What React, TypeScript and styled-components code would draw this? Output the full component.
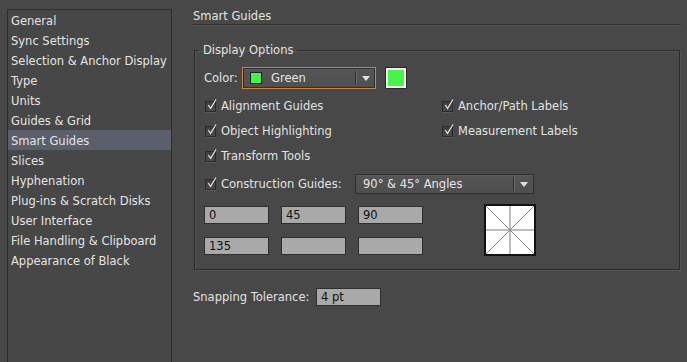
import React from "react";
import styled, { createGlobalStyle } from "styled-components";

const Global = createGlobalStyle`
  html, body { margin: 0; padding: 0; background: #484848; }
  body { font-family: "DejaVu Sans", "Liberation Sans", sans-serif; font-size: 11.5px; color: #e2e2e2; }
`;

const Page = styled.div`
  display: flex;
  width: 687px;
  height: 362px;
  overflow: hidden;
  box-sizing: border-box;
  padding: 9px 0 0 7px;
  background: #484848;
`;

const Sidebar = styled.ul`
  list-style: none;
  margin: 0;
  padding: 0;
  width: 165px;
  height: 380px;
  box-sizing: border-box;
  border: 1px solid #2c2c2c;
  background: #474747;
  flex: none;
`;

const NavItem = styled.li<{ $selected?: boolean }>`
  height: 20px;
  box-sizing: border-box;
  padding: 2px 0 0 3px;
  line-height: 18px;
  white-space: nowrap;
  color: #e4e4e4;
  background: ${(p) => (p.$selected ? "#5b5f6b" : "transparent")};
`;

const Main = styled.div`
  display: flex;
  flex-direction: column;
  margin-left: 21px;
  width: 488px;
`;

const Title = styled.div`
  height: 15px;
  line-height: 15px;
  border-bottom: 1px solid #2e2e2e;
  box-shadow: 0 1px 0 #555;
  color: #e2e2e2;
`;

const Group = styled.fieldset`
  margin: 18px 0 0 1px;
  padding: 9px 0 13px 9px;
  border: 1px solid #2b2b2b;
  box-shadow: 1px 1px 0 #555, inset 1px 1px 0 #555;
  width: 486px;
  box-sizing: border-box;
  display: flex;
  flex-direction: column;
`;

const Legend = styled.legend`
  padding: 0 4px;
  margin-left: -5px;
  line-height: 15px;
  color: #e2e2e2;
`;

const ColorRow = styled.div`
  display: flex;
  align-items: center;
  height: 22px;
`;

const Label = styled.span`
  white-space: nowrap;
`;

const ColorLabel = styled(Label)`
  width: 38px;
`;

const Select = styled.div<{ $focus?: boolean; $w: number; $h: number }>`
  display: flex;
  align-items: center;
  box-sizing: border-box;
  width: ${(p) => p.$w}px;
  height: ${(p) => p.$h}px;
  border: 1px solid ${(p) => (p.$focus ? "#c3874a" : "#2e2e2e")};
  box-shadow: ${(p) => (p.$focus ? "inset 0 0 0 1px #2f2f2f, inset 0 2px 0 #5a5a5a" : "inset 0 1px 0 #5d5d5d")};
  background: linear-gradient(#555, #4f4f4f);
  padding-left: 7px;
  color: #e6e6e6;
`;

const SelectText = styled.span`
  flex: 1;
  white-space: nowrap;
`;

const SelectDivider = styled.span`
  align-self: center;
  width: 1px;
  height: 14px;
  background: #2e2e2e;
  box-shadow: 1px 0 0 #6a6a6a;
  margin-right: 6px;
`;

const Arrow = styled.span`
  width: 0;
  height: 0;
  border-left: 4px solid transparent;
  border-right: 4px solid transparent;
  border-top: 5px solid #e0e0e0;
  margin-right: 5px;
`;

const Swatch = styled.span<{ $size: number; $light?: boolean }>`
  display: inline-block;
  width: ${(p) => p.$size}px;
  height: ${(p) => p.$size}px;
  box-sizing: border-box;
  background: #4cf24c;
  border: ${(p) => (p.$light ? "2px solid #f2f2f2" : "1px solid #262626")};
  box-shadow: ${(p) => (p.$light ? "0 0 0 1px #2a2a2a" : "none")};
  flex: none;
`;

const InlineSwatch = styled(Swatch)`
  margin-right: 9px;
  border-color: #222;
`;

const BigSwatch = styled(Swatch)`
  margin-left: 10px;
`;

const OptionsGrid = styled.div`
  display: grid;
  grid-template-columns: 237px auto;
  grid-auto-rows: 20px;
  row-gap: 5px;
  margin-top: 7px;
`;

const CheckRow = styled.label`
  display: flex;
  align-items: center;
  white-space: nowrap;
`;

const Box = styled.span`
  position: relative;
  width: 11px;
  height: 11px;
  box-sizing: border-box;
  margin: 1px 5px 0 1px;
  border: 1px solid #2a2a2a;
  background: linear-gradient(#3e3e3e, #4a4a4a);
  box-shadow: 0 1px 0 #5a5a5a;
  flex: none;
`;

const Tick = styled.svg`
  position: absolute;
  left: 1px;
  top: -3px;
  overflow: visible;
`;

const Check = () => (
  <Box>
    <Tick width="10" height="11" viewBox="0 0 10 11">
      <path d="M1.2 6 L3.6 9.3 L9 0.5" fill="none" stroke="#e4e4e4" strokeWidth="1.2" />
    </Tick>
  </Box>
);

const ConstructionRow = styled.div`
  display: flex;
  align-items: center;
  height: 20px;
  margin-top: 8px;
`;

const ConstructionLabel = styled(CheckRow)`
  width: 151px;
`;

const AnglesArea = styled.div`
  display: flex;
  align-items: flex-start;
  margin-top: 12px;
`;

const FieldGrid = styled.div`
  display: grid;
  grid-template-columns: repeat(3, 65px);
  column-gap: 12px;
  row-gap: 13px;
`;

const Field = styled.div<{ $w?: number }>`
  box-sizing: border-box;
  width: ${(p) => p.$w ?? 65}px;
  height: 18px;
  line-height: 16px;
  border: 1px solid #2e2e2e;
  background: #a9a9a9;
  color: #111;
  padding-left: 4px;
  white-space: nowrap;
`;

const Preview = styled.svg`
  margin: -2px 0 0 61px;
  display: block;
`;

const SnapRow = styled.div`
  display: flex;
  align-items: center;
  margin-top: 18px;
  height: 18px;
`;

const SnapLabel = styled(Label)`
  width: 123px;
`;

const navItems = [
  "General",
  "Sync Settings",
  "Selection & Anchor Display",
  "Type",
  "Units",
  "Guides & Grid",
  "Smart Guides",
  "Slices",
  "Hyphenation",
  "Plug-ins & Scratch Disks",
  "User Interface",
  "File Handling & Clipboard",
  "Appearance of Black",
];

export default function App() {
  return (
    <>
      <Global />
      <Page>
        <Sidebar>
          {navItems.map((n) => (
            <NavItem key={n} $selected={n === "Smart Guides"}>
              {n}
            </NavItem>
          ))}
        </Sidebar>
        <Main>
          <Title>Smart Guides</Title>
          <Group>
            <Legend>Display Options</Legend>
            <ColorRow>
              <ColorLabel>Color:</ColorLabel>
              <Select $focus $w={134} $h={22}>
                <InlineSwatch $size={12} />
                <SelectText>Green</SelectText>
                <SelectDivider />
                <Arrow />
              </Select>
              <BigSwatch $size={20} $light />
            </ColorRow>
            <OptionsGrid>
              <CheckRow>
                <Check />
                Alignment Guides
              </CheckRow>
              <CheckRow>
                <Check />
                Anchor/Path Labels
              </CheckRow>
              <CheckRow>
                <Check />
                Object Highlighting
              </CheckRow>
              <CheckRow>
                <Check />
                Measurement Labels
              </CheckRow>
              <CheckRow>
                <Check />
                Transform Tools
              </CheckRow>
            </OptionsGrid>
            <ConstructionRow>
              <ConstructionLabel>
                <Check />
                Construction Guides:
              </ConstructionLabel>
              <Select $w={179} $h={20}>
                <SelectText>90° &amp; 45° Angles</SelectText>
                <SelectDivider />
                <Arrow />
              </Select>
            </ConstructionRow>
            <AnglesArea>
              <FieldGrid>
                <Field>0</Field>
                <Field>45</Field>
                <Field>90</Field>
                <Field>135</Field>
                <Field />
                <Field />
              </FieldGrid>
              <Preview width="52" height="52" viewBox="0 0 52 52">
                <rect x="1" y="1" width="50" height="50" fill="#fff" stroke="#111" strokeWidth="2" />
                <line x1="26" y1="2" x2="26" y2="50" stroke="#bdbdbd" strokeWidth="2" />
                <line x1="2" y1="26" x2="50" y2="26" stroke="#bdbdbd" strokeWidth="2" />
                <line x1="2" y1="2" x2="50" y2="50" stroke="#8a8a8a" strokeWidth="1" />
                <line x1="50" y1="2" x2="2" y2="50" stroke="#8a8a8a" strokeWidth="1" />
              </Preview>
            </AnglesArea>
          </Group>
          <SnapRow>
            <SnapLabel>Snapping Tolerance:</SnapLabel>
            <Field $w={65}>4 pt</Field>
          </SnapRow>
        </Main>
      </Page>
    </>
  );
}
